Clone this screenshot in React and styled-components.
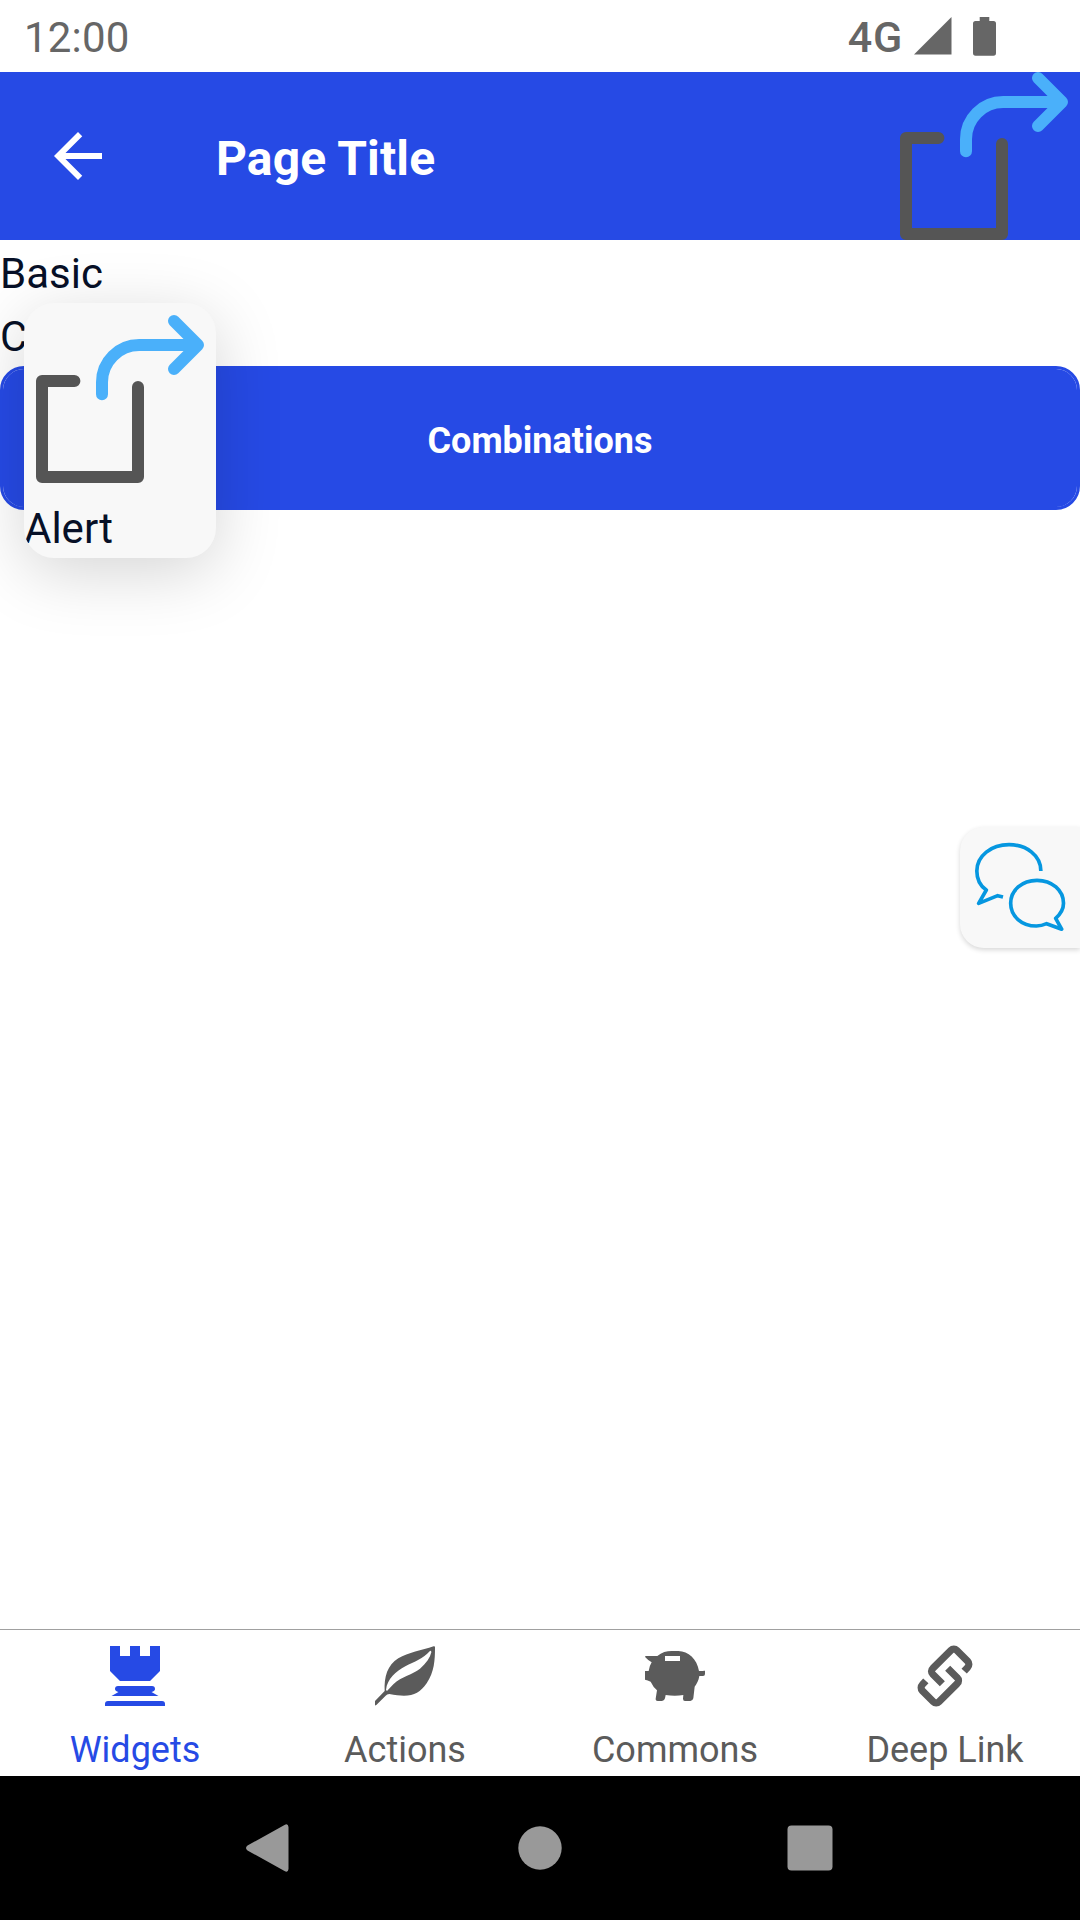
import React from 'react';
import styled, { createGlobalStyle } from 'styled-components';

const BLUE = '#264ae5';
const INK = '#071027';
const GREY = '#5b5b5b';

const GlobalStyle = createGlobalStyle`
  * { box-sizing: border-box; }
  body { margin: 0; background: #fff; font-family: Roboto, sans-serif; }
  svg { display: block; flex: none; }
`;

const Screen = styled.div`
  display: flex;
  flex-direction: column;
  width: 1080px;
  height: 1920px;
  overflow: hidden;
  background: #fff;
`;

const StatusBar = styled.div`
  display: flex;
  align-items: center;
  justify-content: space-between;
  height: 72px;
  padding: 0 84px 0 24px;
  color: #666;
  font-size: 42px;
  line-height: 48px;
`;

const Clock = styled.span`
  padding-top: 4px;
  letter-spacing: 0.2px;
`;

const StatusIcons = styled.div`
  display: flex;
  align-items: center;
`;

const Network = styled.span`
  padding-top: 1px;
  margin-right: 11px;
  font-size: 43px;
  font-weight: 500;
  letter-spacing: 0.8px;
`;

const BatterySlot = styled.div`
  margin-left: 21px;
`;

const Header = styled.header`
  display: flex;
  align-items: center;
  height: 168px;
  padding-left: 42px;
  background: ${BLUE};
`;

const Title = styled.h1`
  flex: 1;
  margin: 6px 0 0 102px;
  color: #fff;
  font-size: 48px;
  line-height: 56px;
  font-weight: 700;
  letter-spacing: 0.15px;
`;

const Content = styled.main`
  position: relative;
  flex: 1;
  display: flex;
  flex-direction: column;
`;

const Text = styled.div`
  height: 63px;
  padding-top: 2px;
  color: ${INK};
  font-size: 42px;
  line-height: 63px;
`;

const PrimaryButton = styled.button`
  height: 144px;
  padding: 6px 0 0;
  border: 3px solid ${BLUE};
  border-radius: 24px;
  background: ${BLUE};
  background-clip: padding-box;
  color: #fff;
  font-family: inherit;
  font-size: 36px;
  font-weight: 700;
`;

const AlertCard = styled.div`
  position: absolute;
  top: 63px;
  left: 24px;
  width: 192px;
  border-radius: 30px;
  overflow: hidden;
  background: #f8f8f8;
  box-shadow: 0 14px 66px rgba(0, 0, 0, 0.17);
`;

const ChatTab = styled.button`
  position: absolute;
  top: 587px;
  right: 0;
  width: 120px;
  height: 121px;
  padding: 0;
  border: 0;
  border-radius: 24px 0 0 24px;
  background: #f8f8f8;
  box-shadow: 0 2px 5px rgba(0, 0, 0, 0.16);
`;

const TabBar = styled.nav`
  display: grid;
  grid-template-columns: repeat(4, 1fr);
  height: 147px;
  border-top: 1px solid #a0a0a0;
`;

const Tab = styled.div`
  display: flex;
  flex-direction: column;
  align-items: center;
  gap: 23px;
  padding-top: 16px;
  color: ${(p) => (p.$active ? BLUE : GREY)};
  font-size: 36px;
  line-height: 42px;
`;

const TabIcon = styled.div`
  display: flex;
  align-items: center;
  justify-content: center;
  height: 60px;
`;

const SystemBar = styled.div`
  display: grid;
  grid-template-columns: repeat(3, 270px);
  justify-content: center;
  justify-items: center;
  align-items: center;
  height: 144px;
  background: #000;
`;

const ShareIcon = () => (
  <svg width="192" height="192" viewBox="0 0 16 16" fill="none" strokeLinecap="round" strokeLinejoin="round">
    <path d="M4.2 6.5H1.5v8h8V7" stroke="#555" />
    <path d="M6.5 7.6V6.600a3.100 3.100 0 0 1 3.100-3.100h4.900M12.500 1.500l2 2-2 2" stroke="#4ab0fa" />
  </svg>
);

const RookIcon = () => (
  <svg width="60" height="60" viewBox="0 0 60 60" fill="currentColor">
    <path d="M5 0h10v10h10V0h10v10h10V0h10v25L45 35H15L5 25z" />
    <path d="M13 40h34q3 0 3 3 0 2-3.500 3L53.500 50H6.500L13.500 46q-3.500-1-3.500-3 0-3 3-3z" />
    <path d="M3 55h54q3 0 3 3v2H0v-2q0-3 3-3z" />
  </svg>
);

const LeafIcon = () => (
  <svg width="60" height="60" viewBox="135 108 180 180" fill="currentColor">
    <path
      fillRule="evenodd"
      d="M135 273 164 243C162 200 172 166 205 145C235 127 275 122 311 109Q315 108 315 112C315 150 313 187 290 220C265 256 238 264 178 252Q171 252 167 257L139 285Q135 288 135 284Z
      M171 243 190 223C215 198 248 194 270 176C289 160 300 144 304 127Q303 120 299 124C280 146 253 155 226 169C198 184 172 206 168 240Z"
    />
  </svg>
);

const PiggyIcon = () => (
  <svg width="60" height="60" viewBox="195 108 180 180" fill="currentColor">
    <path
      fillRule="evenodd"
      d="M197 138H232C245 127 260 123 275 123H295C325 124 351 147 357 183H366Q371 183 371 182H375V192Q375 198 369 198H358C356 212 350 222 344 230L340 265Q338 273 331 273H315Q309 273 309 266L310 255Q285 259 257 255L255 265Q253 273 246 273H233Q226 273 227 266L231 241Q220 232 212 215Q203 210 195 209V183H206Q208 168 215 157Q204 151 196 142Q194 138 197 138ZM255 138V153H300V138Z"
    />
  </svg>
);

const LinkIcon = () => (
  <svg width="60" height="64" viewBox="195 102 180 192" fill="none" stroke="currentColor" strokeWidth="21.500">
    <path d="M342.500 183.500 353 172A13 13 0 0 0 353 154L320 121A12 12 0 0 0 303 121L248.500 175A12 12 0 0 0 248.500 193L277 221.500" />
    <path d="M227.500 212.500 217 224A13 13 0 0 0 217 242L250 275A12 12 0 0 0 267 275L321.500 221A12 12 0 0 0 321.500 203L293 174.500" />
  </svg>
);

const ChatIcon = () => (
  <svg width="120" height="121" viewBox="60 51 360 363" fill="none" stroke="#0697e0" strokeWidth="11" strokeLinejoin="round">
    <path d="M302.500 183C303 137 260 104 207 104C154 104 110.500 137 110.500 183C110.500 207 121 228 139 240L116 280L173 257L189 261" />
    <path d="M320 341C311 345 301 348 289 348C245 348 212 319 212 280C212 241 246 211 291 211C336 211 370.500 241 370.500 280C370.500 297 362 312 347 325L365 357.500Z" />
  </svg>
);

const TABS = [
  { label: 'Widgets', Icon: RookIcon, active: true },
  { label: 'Actions', Icon: LeafIcon },
  { label: 'Commons', Icon: PiggyIcon },
  { label: 'Deep Link', Icon: LinkIcon },
];

export default function App() {
  return (
    <Screen>
      <GlobalStyle />
      <StatusBar>
        <Clock>12:00</Clock>
        <StatusIcons>
          <Network>4G</Network>
          <svg width="38" height="38" viewBox="0 0 38 38" fill="#666">
            <path d="M0 37.500 37.500 0v37.500z" />
          </svg>
          <BatterySlot>
            <svg width="23" height="39" viewBox="0 0 23 39" fill="#666">
              <path d="M6.700 0h9.600v4H20.500Q23 4 23 6.500v29.500Q23 38.700 20.500 38.700h-18Q0 38.700 0 36V6.500Q0 4 2.500 4H6.700z" />
            </svg>
          </BatterySlot>
        </StatusIcons>
      </StatusBar>
      <Header>
        <svg width="72" height="72" viewBox="0 0 24 24" fill="#fff">
          <path d="M20 11H7.830l5.590-5.590L12 4l-8 8 8 8 1.410-1.410L7.830 13H20z" />
        </svg>
        <Title>Page Title</Title>
        <ShareIcon />
      </Header>
      <Content>
        <Text>Basic</Text>
        <Text>C</Text>
        <PrimaryButton>Combinations</PrimaryButton>
        <AlertCard>
          <ShareIcon />
          <Text>Alert</Text>
        </AlertCard>
        <ChatTab aria-label="Chat">
          <ChatIcon />
        </ChatTab>
      </Content>
      <TabBar>
        {TABS.map(({ label, Icon, active }) => (
          <Tab key={label} $active={active}>
            <TabIcon>
              <Icon />
            </TabIcon>
            <span>{label}</span>
          </Tab>
        ))}
      </TabBar>
      <SystemBar>
        <svg width="48" height="48" viewBox="0 0 48 48" fill="#999">
          <path d="M1.500 21.500 38.500 1Q42 -1 42.500 3V45Q42 49 38.500 47L1.500 26.500Q-1.500 24 1.500 21.500z" />
        </svg>
        <svg width="44" height="44" viewBox="0 0 44 44" fill="#999">
          <circle cx="22" cy="22" r="21.700" />
        </svg>
        <svg width="46" height="46" viewBox="0 0 46 46" fill="#999">
          <rect x=".5" y=".5" width="45" height="45" rx="4" />
        </svg>
      </SystemBar>
    </Screen>
  );
}
